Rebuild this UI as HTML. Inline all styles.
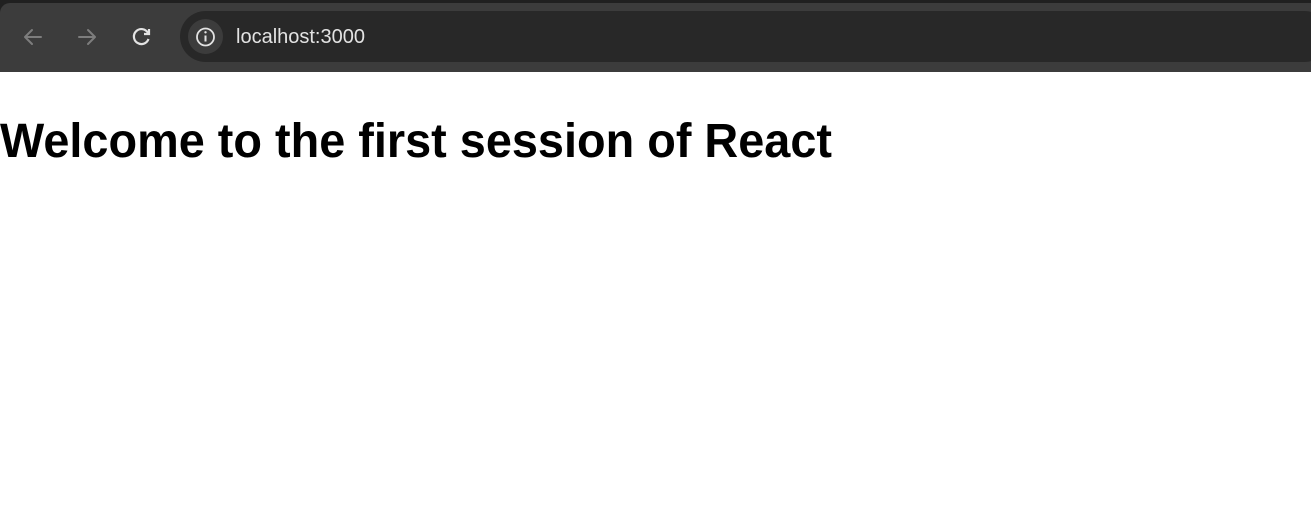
<!DOCTYPE html>
<html><head><style>
html,body{margin:0;padding:0;width:1311px;height:511px;background:#fff;overflow:hidden;font-family:"Liberation Sans",sans-serif}
.top{position:absolute;left:0;top:0;width:1311px;height:14px;background:#202020}
.bar{position:absolute;left:0;top:3px;width:1311px;height:69px;background:#3c3c3c;border-radius:10px 0 0 0}
.addr{position:absolute;left:180px;top:11px;width:1150px;height:51px;background:#282828;border-radius:26px}
.info{position:absolute;left:188px;top:19px;width:35px;height:35px;border-radius:50%;background:#3c3c3c}
.url{position:absolute;left:236px;top:26px;color:#e3e3e3;font-size:20px}
</style></head><body>
<div class="top"></div>
<div class="bar"></div>
<div class="addr"></div>
<div class="info"></div>
<svg style="position:absolute;left:0;top:0" width="260" height="72">
<g fill="none" stroke="#7d7d7d" stroke-width="2" stroke-linecap="round" stroke-linejoin="round">
<path d="M41 37H25M32 30l-7 7 7 7"/>
<path d="M79 37h16M88 30l7 7-7 7"/>
</g>
<g fill="none" stroke="#e3e3e3" stroke-width="2.2">
<path d="M148 33a7.5 7.5 0 1 0 0.5 6"/>
<path d="M149 29v5h-5" stroke-linejoin="miter"/>
</g>
<circle cx="205.5" cy="37" r="8.5" fill="none" stroke="#e3e3e3" stroke-width="1.8"/>
<path d="M205.5 35.5v6" stroke="#e3e3e3" stroke-width="2"/>
<circle cx="205.5" cy="32.3" r="1.2" fill="#e3e3e3"/>
</svg>
<div class="url">localhost:3000</div>
<svg style="position:absolute;left:0;top:100px" width="900" height="80">
<text x="0" y="57" font-family="Liberation Sans, sans-serif" font-weight="bold" font-size="48" textLength="832" lengthAdjust="spacingAndGlyphs" fill="#000">Welcome to the first session of React</text>
</svg>
</body></html>
